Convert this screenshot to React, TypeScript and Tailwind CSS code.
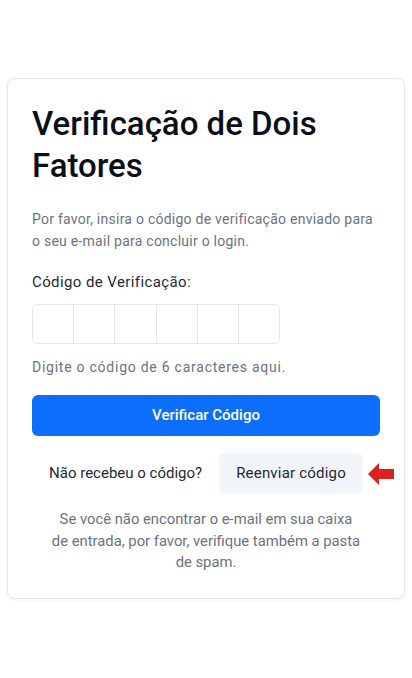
export default function App() {
  return (
    <div className="min-h-[678px] bg-white pt-[78px] px-[7px] font-['Roboto',sans-serif]">
      <div className="border border-[#e5e7eb] rounded-lg shadow-[0_1px_3px_rgba(0,0,0,0.06)] bg-white p-6">
        <h1 className="text-[33px] leading-[41.6px] font-medium text-[#0b0f19]">
          Verificação de Dois Fatores
        </h1>
        <p className="mt-[22px] text-[14px] leading-[22px] tracking-[0.25px] text-[#6b7280]">
          Por favor, insira o código de verificação enviado para o seu e-mail para concluir o login.
        </p>

        <label className="block mt-[18px] text-[15px] leading-6 tracking-[0.4px] text-[#1f2937]">
          Código de Verificação:
        </label>
        <div className="mt-[10px] flex w-[248px] h-10 border border-[#e5e7eb] rounded-md overflow-hidden">
          {[0, 1, 2, 3, 4, 5].map((i) => (
            <input
              key={i}
              maxLength={1}
              className={
                'flex-1 min-w-0 h-full outline-none bg-white text-center ' +
                (i > 0 ? 'border-l border-[#e5e7eb]' : '')
              }
            />
          ))}
        </div>
        <p className="mt-[13px] text-[14px] leading-5 tracking-[0.75px] text-[#6b7280]">
          Digite o código de 6 caracteres aqui.
        </p>

        <button className="mt-[18px] w-full h-[41px] rounded-md bg-[#0d6efd] text-white text-[15px] font-medium">
          Verificar Código
        </button>

        <div className="mt-[17px] flex items-center justify-center gap-[17px]">
          <span className="text-[15px] text-[#1f2937]">Não recebeu o código?</span>
          <div className="relative">
            <button className="h-10 px-[17px] rounded-md bg-[#f1f5f9] text-[15px] text-[#1f2937] tracking-[0.2px]">
              Reenviar código
            </button>
            <svg
              className="absolute left-[calc(100%+5px)] top-[9px]"
              width="26"
              height="24"
              viewBox="0 0 26 24"
            >
              <path d="M0 12 L11 1 L11 7 L26 7 L26 17 L11 17 L11 23 Z" fill="#dc1f1f" />
            </svg>
          </div>
        </div>

        <p className="mt-4 mx-auto max-w-[310px] text-center text-[14.8px] leading-[21.5px] text-[#6b7280]">
          Se você não encontrar o e-mail em sua caixa de entrada, por favor, verifique também a pasta de spam.
        </p>
      </div>
    </div>
  );
}
